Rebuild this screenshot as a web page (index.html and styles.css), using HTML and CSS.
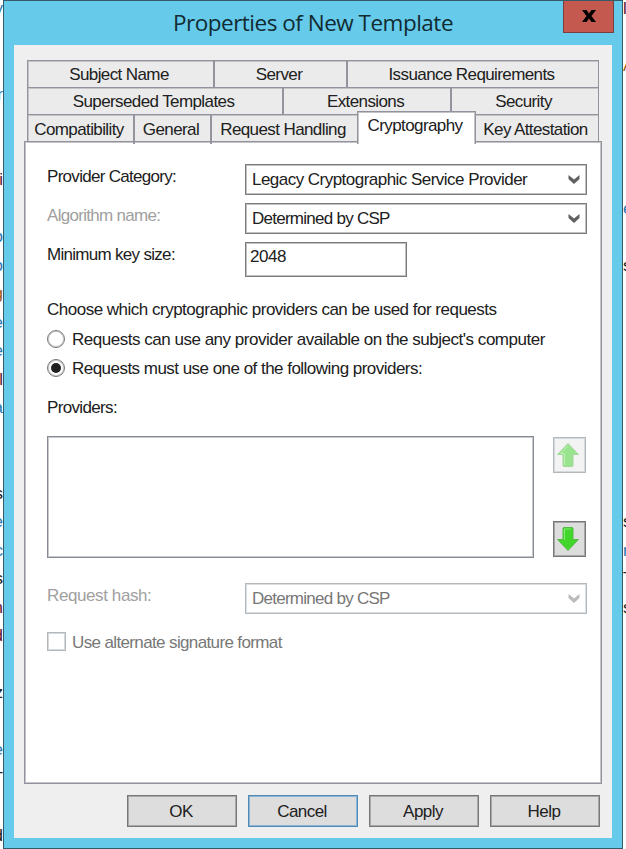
FILE: index.html
```html
<!DOCTYPE html>
<html lang="en">
<head>
<meta charset="utf-8">
<title>Properties of New Template</title>
<link rel="stylesheet" href="styles.css">
</head>
<body>
<div class="page-edge left" aria-hidden="true"><i class="blue">y</i><i></i><i></i><i class="blue">r</i><i></i><i></i><i class="red">i</i><i></i><i class="blue">o</i><i class="blue">o</i><i class="brown">g</i><i class="blue">e</i><i class="blue">e</i><i class="red">l</i><i class="blue">a</i><i></i><i></i><i>s</i><i class="blue">e</i><i class="blue">c</i><i>s</i><i class="red">n</i><i class="red">d</i><i></i><i>z</i><i></i><i class="blue">e</i><i>T</i><i></i><i>d</i></div>
<main class="dialog">
  <header class="titlebar">
    <h1 class="title">Properties of New Template</h1>
    <button class="close" aria-label="Close"><svg width="14" height="12" viewBox="0 0 14 12"><path d="M0 0h4.500L7 3.500 9.500 0H14L9.500 6 14 12H9.500L7 8.500 4.500 12H0l4.500-6z"/></svg></button>
  </header>
  <section class="client">
    <nav class="tabs">
      <div class="tab-row row-one"><span class="tab">Subject Name</span><span class="tab">Server</span><span class="tab">Issuance Requirements</span></div>
      <div class="tab-row row-two"><span class="tab">Superseded Templates</span><span class="tab">Extensions</span><span class="tab">Security</span></div>
      <div class="tab-row row-three"><span class="tab">Compatibility</span><span class="tab">General</span><span class="tab">Request Handling</span><span class="tab selected">Cryptography</span><span class="tab">Key Attestation</span></div>
    </nav>
    <div class="panel">
      <div class="field"><label>Provider Category:</label><div class="select long">Legacy Cryptographic Service Provider<svg class="chevron" width="12" height="9" viewBox="0 0 12 9"><path d="M0.500 0l5.500 4.500L11.500 0v4L6 9 0.500 4z"/></svg></div></div>
      <div class="field"><label class="muted">Algorithm name:</label><div class="select">Determined by CSP<svg class="chevron" width="12" height="9" viewBox="0 0 12 9"><path d="M0.500 0l5.500 4.500L11.500 0v4L6 9 0.500 4z"/></svg></div></div>
      <div class="field key-size"><label>Minimum key size:</label><div class="input">2048</div></div>
      <p class="prompt">Choose which cryptographic providers can be used for requests</p>
      <div class="option first"><span class="radio"></span><span>Requests can use any provider available on the subject's computer</span></div>
      <div class="option second"><span class="radio checked"></span><span>Requests must use one of the following providers:</span></div>
      <p class="list-label">Providers:</p>
      <div class="providers">
        <div class="list"></div>
        <div class="order">
          <button class="move disabled" aria-label="Move up"><svg width="24" height="26" viewBox="0 0 24 26"><path class="arrow" d="M12 1.500L22.500 12.500H17V23.500Q17 24.500 16 24.500H8Q7 24.500 7 23.500V12.500H1.500z"/><path class="shine" d="M12 3.500L4.500 11.500h4V23"/></svg></button>
          <button class="move" aria-label="Move down"><svg width="24" height="26" viewBox="0 0 24 26"><path class="arrow" d="M12 24.500L22.500 13.500H17V2.500Q17 1.500 16 1.500H8Q7 1.500 7 2.500V13.500H1.500z"/><path class="shine" d="M8.500 14V3h6"/></svg></button>
        </div>
      </div>
      <div class="field hash"><label class="muted">Request hash:</label><div class="select off">Determined by CSP<svg class="chevron" width="12" height="9" viewBox="0 0 12 9"><path d="M0.500 0l5.500 4.500L11.500 0v4L6 9 0.500 4z"/></svg></div></div>
      <div class="option alternate"><span class="checkbox"></span><span>Use alternate signature format</span></div>
    </div>
    <footer class="actions"><button>OK</button><button class="default">Cancel</button><button>Apply</button><button>Help</button></footer>
  </section>
</main>
<div class="page-edge right" aria-hidden="true"><i class="red">l</i><i></i><i class="brown">A</i><i></i><i></i><i></i><i></i><i class="blue">e</i><i></i><i>s</i><i></i><i></i><i></i><i></i><i></i><i></i><i></i><i></i><i>s</i><i class="blue">r</i><i>T</i><i>s</i></div>
</body>
</html>
```
FILE: styles.css
```css
* { box-sizing: border-box; }
body { margin: 0; width: 626px; height: 849px; display: grid; grid-template-columns: 3px 620px 3px; background: #fff; overflow: hidden; font: 17px/20px "Liberation Sans", Arial, sans-serif; letter-spacing: -0.48px; color: #202020; }
button { font: inherit; letter-spacing: inherit; color: inherit; padding: 0; }
p, h1 { margin: 0; font-weight: normal; }
.page-edge { height: 849px; overflow: hidden; color: #222; letter-spacing: 0; }
.page-edge i { display: flex; height: 28.5px; line-height: 17px; font-style: normal; }
.left i { justify-content: flex-end; }
.page-edge .blue { color: #2878b0; }
.page-edge .red { color: #5b1836; }
.page-edge .brown { color: #9a5b21; }
.dialog { width: 620px; height: 849px; border: 1px solid #355b69; background: #66caea; padding: 0 10px 10px; }
.titlebar { height: 44px; position: relative; display: flex; justify-content: center; }
.title { font: 22.5px/44px "Open Sans", sans-serif; letter-spacing: -0.5px; color: #122a32; white-space: nowrap; }
.close { position: absolute; right: -2px; top: 0; width: 51px; height: 32px; border: 1px solid #793f40; border-top: 0; background: #c4594f; display: grid; place-items: center; }
.close svg { margin-top: -2px; }
.client { height: 793px; background: #efefef; padding: 15px 10px 0; }
.tabs { padding: 0 3px; height: 81px; }
.tab-row { display: grid; height: 27px; border: 1px solid #92939c; border-bottom: 0; background: #ebebeb; box-shadow: inset 1px 1px #c3c3c8; letter-spacing: -0.6px; }
.row-one { grid-template-columns: 187px 133px 1fr; }
.row-two { grid-template-columns: 256px 168px 1fr; }
.row-three { grid-template-columns: 107px 77px 145px 119px 1fr; }
.tab { display: flex; justify-content: center; align-items: center; padding: 1px 3px 0 0; border-right: 2px solid #93949d; white-space: nowrap; }
.tab:last-child { border-right: 0; }
.tab.selected { position: relative; height: 33px; margin-top: -4px; padding: 0 3px 4px 0; background: #fff; border: 1px solid #92939c; border-bottom: 0; box-shadow: inset 1px 1px #c3c3c8, inset -1px 0 #c3c3c8; }
.row-three .tab:nth-child(3) { border-right: 0; }
.panel { height: 643px; background: #fff; border: 1px solid #92939c; box-shadow: inset 0 0 0 1px #c3c3c8; padding: 22px 14px 0 22px; }
.field { display: grid; grid-template-columns: 198px 342px; height: 39px; }
.muted { color: #a0a0a0; }
.field label { padding-top: 3px; letter-spacing: -0.7px; }
.select { height: 31px; border: 1px solid #7b7b7b; box-shadow: inset 0 0 0 1px #c0c0c0; padding: 0 6px; display: flex; align-items: center; justify-content: space-between; letter-spacing: -0.74px; }
.long { letter-spacing: -0.53px; }
.chevron { fill: #606060; }
.input { height: 35px; width: 162px; border: 1px solid #7b7b7b; box-shadow: inset 0 0 0 1px #c0c0c0; padding: 4px; }
.prompt { margin-top: 19px; letter-spacing: -0.5px; }
.option { display: flex; align-items: center; gap: 7px; height: 29px; }
.option > span:last-child { padding-top: 2px; }
.first { margin-top: 4px; }
.second { letter-spacing: -0.53px; }
.radio { width: 18px; height: 18px; border: 1px solid #777; box-shadow: inset 0 0 0 1px #ccc; border-radius: 50%; display: grid; place-items: center; }
.checked::after { content: ""; width: 10px; height: 10px; border-radius: 50%; background: #202020; }
.list-label { margin-top: 16px; letter-spacing: -0.65px; }
.providers { display: flex; gap: 19px; margin-top: 18px; }
.list { width: 487px; height: 122px; border: 1px solid #858a94; box-shadow: inset 0 0 0 1px #c5c8cd; }
.order { display: flex; flex-direction: column; justify-content: space-between; padding: 1px 0; }
.move { width: 33px; height: 36px; border: 1px solid #777; box-shadow: inset 0 0 0 1px #a8a8a8; background: #ddd; display: grid; place-items: center; }
.move svg { margin-left: -3px; }
.arrow { fill: #42d52b; stroke: #58b94a; }
.shine { fill: none; stroke: #83ef70; }
.disabled { background: #f3f3f3; border-color: #b2b8bb; box-shadow: inset 0 0 0 1px #d5d9db; }
.disabled svg { opacity: .5; }
.hash { margin-top: 25px; }
.hash label { letter-spacing: -0.4px; }
.off { border-color: #b2b8bb; box-shadow: inset 0 0 0 1px #dcdfe1; color: #777; }
.off .chevron { fill: #bbb; }
.checkbox { width: 19px; height: 19px; border: 1px solid #b2b8bb; box-shadow: inset 0 0 0 1px #d5d9db; }
.alternate { margin-top: 5px; gap: 6px; color: #777; letter-spacing: -0.63px; }
.actions { display: flex; gap: 11px; padding: 11px 0 0 103px; letter-spacing: -0.55px; }
.actions button { width: 110px; height: 32px; border: 1px solid #777; box-shadow: inset 0 0 0 1px #a8a8a8; background: #ddd; padding: 2px 2px 0 0; }
.actions .default { border-color: #4e8bb9; box-shadow: inset 0 0 0 1px #8fb5d2; }
```
